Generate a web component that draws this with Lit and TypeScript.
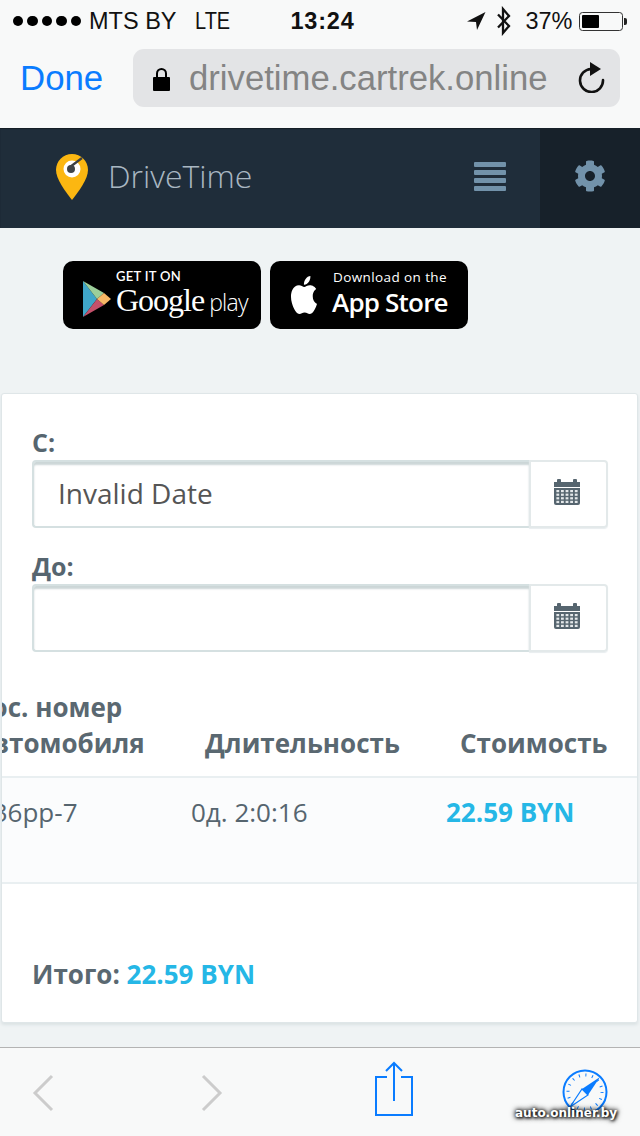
import { LitElement, html, css, svg } from "lit";
import { customElement } from "lit/decorators.js";

const calendar = html`<svg class="cal" viewBox="0 0 26 28" aria-hidden="true">
  <path fill="#56656f" d="M0 5h3V3a1 1 0 0 1 1-1h2a1 1 0 0 1 1 1v2h12V3a1 1 0 0 1 1-1h2a1 1 0 0 1 1 1v2h3v5H0z"/>
  <path fill="#56656f" d="M0 11h26v15a2 2 0 0 1-2 2H2a2 2 0 0 1-2-2z"/>
  ${[0, 1, 2, 3].map((r) => [0, 1, 2, 3, 4].map((c) => svg`<rect x="${2.4 + c * 4.6}" y="${13 + r * 3.6}" width="2.8" height="2.2" fill="#e4e8ea"/>`))}
</svg>`;

@customElement("app-root")
export class AppRoot extends LitElement {
  static styles = css`
    :host { display: block; width: 640px; height: 1136px; overflow: hidden; background: #eff3f4; font-family: "Open Sans", "Liberation Sans", sans-serif; position: relative; }
    .top { height: 128px; background: #f8f9f9; font-family: "Liberation Sans", sans-serif; display: flex; flex-direction: column; }
    .status { height: 42px; display: flex; align-items: center; font-size: 23.5px; color: #111; padding-left: 13px; }
    .dots { display: flex; gap: 4px; width: 76px; }
    .dots i { width: 10.4px; height: 10.4px; border-radius: 50%; background: #000; flex: none; }
    .lte { margin-left: 19px; width: 41px; transform: scaleX(.85); transform-origin: left; }
    .time { font-weight: 700; margin-left: 54px; width: 176px; letter-spacing: .8px; }
    .loc { width: 20px; height: 20px; }
    .bt { width: 16px; height: 30px; margin-left: 10px; }
    .pct { margin-left: 13px; width: 54px; }
    .batt { width: 44px; height: 19px; border: 1.2px solid #333; border-radius: 3.5px; padding: 2px; box-sizing: border-box; }
    .batt b { display: block; width: 17px; height: 100%; background: #000; border-radius: 1px; }
    .nub { width: 3px; height: 7px; background: #222; margin-left: 1px; border-radius: 0 2px 2px 0; }
    .nav { display: flex; align-items: flex-start; padding: 7px 0 0 20px; }
    .done { color: #0a7cff; font-size: 34.8px; width: 113px; line-height: 58px; }
    .url { width: 487px; height: 58px; background: #e3e4e6; border-radius: 11px; display: flex; align-items: center; color: #848484; font-size: 34.7px; box-sizing: border-box; padding-left: 20px; }
    .lock { width: 17px; height: 24px; margin-right: 19px; margin-top: 2px; }
    .url span { width: 388px; white-space: nowrap; }
    .reload { width: 30px; height: 32px; margin-top: -2px; }
    .head { height: 100px; background: #1f2d3a; display: flex; align-items: center; box-shadow: inset 0 1px 1px #141d25; }
    .pin { width: 34px; height: 48px; margin: -3px 20px 0 55px; }
    .brand { font-size: 32px; line-height: 40px; font-weight: 300; color: #a9b7c2; width: 365px; margin-top: -4px; margin-left: -1px; }
    .burger { width: 32px; display: flex; flex-direction: column; gap: 3px; margin-top: -3px; margin-left: 1px; }
    .burger i { height: 5px; border-radius: 1px; background: #7292aa; }
    .cog { margin-left: 34px; width: 100px; height: 100px; background: #17212a; display: flex; align-items: center; justify-content: center; }
    .cog svg { width: 32px; height: 32px; margin-top: -4px; }
    .stores { display: flex; gap: 9px; padding: 33px 0 0 63px; height: 165px; box-sizing: border-box; }
    .badge { width: 198px; height: 68px; background: #000; border-radius: 10px; color: #fff; display: flex; box-sizing: border-box; }
    .play { width: 28px; height: 36px; margin: 20px 0 0 20px; }
    .gtext { margin-left: 5px; display: flex; flex-direction: column; padding-top: 7px; }
    .gtext small { font-size: 13px; font-weight: 600; line-height: 17px; letter-spacing: .3px; font-family: "Lato", sans-serif; }
    .gplay { display: flex; align-items: baseline; line-height: 33px; margin-top: -1px; }
    .gplay b { font: 400 32px/33px "Liberation Serif", serif; letter-spacing: -1px; }
    .gplay span { font: 300 23px/33px "Open Sans", sans-serif; margin-left: 5px; letter-spacing: -.8px; }
    .apple { width: 32px; height: 38px; margin: 15px 0 0 18px; }
    .atext { margin-left: 12px; display: flex; flex-direction: column; padding-top: 8px; }
    .atext small { font: 400 13.5px/17px "Open Sans", sans-serif; letter-spacing: .4px; white-space: nowrap; padding-left: 1px; }
    .atext b { font: 600 26px/32px "Open Sans", sans-serif; letter-spacing: -.8px; white-space: nowrap; }
    .card { margin: 0 2px 0 1px; height: 630px; background: #fff; border: 1px solid #dfe6e8; border-radius: 3px; box-shadow: 0 2px 3px #dbe2e4; box-sizing: border-box; padding-top: 33px; display: flex; flex-direction: column; color: #56656f; overflow: hidden; }
    label { display: block; margin-left: 30px; font-size: 25px; line-height: 31px; padding-bottom: 2px; font-weight: 700; }
    .group { display: flex; margin: 0 29px 23px 30px; height: 68px; }
    .input { flex: none; width: 497px; box-sizing: border-box; border: 2px solid #d5e0e1; border-right: 0; border-radius: 4px 0 0 4px; box-shadow: inset 0 3px 2px #ccd6d7; font-size: 28px; color: #555; padding: 0 0 2px 24px; display: flex; align-items: center; }
    .addon { flex: 1; box-sizing: border-box; border: 2px solid #e3e9ea; border-radius: 0 4px 4px 0; box-shadow: 0 1px 1px #e8edef; display: flex; align-items: center; justify-content: center; padding: 0 4px 6px 0; }
    .cal { width: 26px; height: 28px; }
    .table { display: grid; grid-template-columns: 228px 255px 200px; margin-left: -39px; width: 690px; margin-top: 14px; }
    .th { font-size: 26px; line-height: 36px; font-weight: 700; padding: 0 0 15px 14px; align-self: end; white-space: nowrap; color: #5a6871; }
    .row { grid-column: 1 / -1; display: grid; grid-template-columns: subgrid; height: 108px; background: #fbfcfd; border-top: 2px solid #e9eff1; border-bottom: 2px solid #e9eff1; box-sizing: border-box; padding-top: 17px; font-size: 26px; line-height: 34px; }
    .price { color: #25b7e6; font-weight: 700; }
    .total { margin: 72px 0 0 30px; font-size: 26px; font-weight: 700; line-height: 36px; color: #5a6871; }
    .bottom { margin-top: 24px; height: 89px; background: #f8f9f9; border-top: 1px solid #b3b3b3; box-sizing: border-box; display: flex; }
    .bottom svg { flex: none; }
    .back { width: 24px; height: 40px; margin: 25px 0 0 31px; }
    .fwd { width: 24px; height: 40px; margin: 25px 0 0 145px; }
    .share { width: 42px; height: 56px; margin: 13px 0 0 149px; }
    .compass { width: 48px; height: 48px; margin: 20px 0 0 146px; }
    .mark { position: absolute; left: 515px; top: 1103px; font: 700 12px/20px "DejaVu Sans", sans-serif; color: #fff; white-space: nowrap; text-shadow: 0 0 4px #000, 0 0 6px #000, 1px 1px 3px #222; }
  `;

  render() {
    return html`
      <div class="top">
        <div class="status">
          <div class="dots"><i></i><i></i><i></i><i></i><i></i></div>
          <span>MTS BY</span><span class="lte">LTE</span>
          <span class="time">13:24</span>
          <svg class="loc" viewBox="0 0 20 20"><path d="M19.500 1 1 10.500 10 11l1 8z" fill="#111"/></svg>
          <svg class="bt" viewBox="0 0 16 30"><path d="M2 8.500 13 20l-6 7V3l6 7L2 21.500" fill="none" stroke="#111" stroke-width="2.300"/></svg>
          <span class="pct">37%</span>
          <div class="batt"><b></b></div><div class="nub"></div>
        </div>
        <div class="nav">
          <div class="done">Done</div>
          <div class="url">
            <svg class="lock" viewBox="0 0 17 24"><path d="M1 10h15a1 1 0 0 1 1 1v12a1 1 0 0 1-1 1H1a1 1 0 0 1-1-1V11a1 1 0 0 1 1-1z"/><path d="M4 11V6.500a4.500 4.500 0 0 1 9 0V11" fill="none" stroke="#000" stroke-width="2"/></svg>
            <span>drivetime.cartrek.online</span>
            <svg class="reload" viewBox="0 0 30 32"><path d="M14 8a11.500 11.500 0 1 0 12 11" fill="none" stroke="#111" stroke-width="2.600" stroke-linecap="round"/><path d="M13 1l11 7-11 7z" fill="#111"/></svg>
          </div>
        </div>
      </div>
      <div class="head">
        <svg class="pin" viewBox="0 0 34 48">
          <path d="M17 1C8 1 1 8 1 17c0 9 9 21 16 30 7-9 16-21 16-30C33 8 26 1 17 1z" fill="#fcb711"/>
          <circle cx="17" cy="16" r="8.500" fill="#fff"/>
          <path d="M15 14 27 5" stroke="#3a3f44" stroke-width="2.200"/>
          <circle cx="16" cy="16" r="4" fill="#3f4448"/>
        </svg>
        <div class="brand">DriveTime</div>
        <div class="burger"><i></i><i></i><i></i><i></i></div>
        <div class="cog"><svg viewBox="0 0 512 512"><path fill="#7292aa" d="M487.400 315.700l-42.600-24.600c4.300-23.200 4.300-47 0-70.200l42.600-24.600c4.900-2.800 7.100-8.600 5.500-14-11.100-35.600-30-67.800-54.700-94.600-3.800-4.100-10-5.100-14.800-2.300L380.800 110c-17.900-15.400-38.500-27.300-60.800-35.100V25.800c0-5.600-3.900-10.500-9.400-11.700-36.700-8.200-74.300-7.800-109.200 0-5.500 1.200-9.400 6.100-9.400 11.700V75c-22.200 7.900-42.800 19.800-60.800 35.100L88.700 85.500c-4.900-2.800-11-1.900-14.800 2.300-24.700 26.700-43.600 58.900-54.700 94.600-1.700 5.400.6 11.200 5.500 14L67.300 221c-4.300 23.200-4.300 47 0 70.200l-42.600 24.600c-4.900 2.800-7.100 8.600-5.500 14 11.100 35.600 30 67.800 54.700 94.600 3.800 4.100 10 5.100 14.800 2.300l42.600-24.600c17.900 15.400 38.500 27.300 60.800 35.100v49.200c0 5.600 3.900 10.500 9.400 11.700 36.700 8.200 74.300 7.800 109.200 0 5.500-1.200 9.400-6.100 9.400-11.700v-49.200c22.200-7.900 42.800-19.800 60.800-35.100l42.600 24.600c4.900 2.800 11 1.900 14.800-2.300 24.700-26.700 43.600-58.900 54.700-94.600 1.500-5.500-.7-11.300-5.600-14.100zM256 336c-44.100 0-80-35.900-80-80s35.900-80 80-80 80 35.900 80 80-35.900 80-80 80z"/></svg></div>
      </div>
      <div class="stores">
        <div class="badge">
          <svg class="play" viewBox="0 0 28 36">
            <path d="M0 0v36l14-18z" fill="#3fa6c9"/>
            <path d="M0 0l14 18 7-6z" fill="#9ccf9a"/>
            <path d="M0 36l14-18 7 6z" fill="#c4506a"/>
            <path d="M21 12l7 6-7 6-7-6z" fill="#f8b866"/>
          </svg>
          <div class="gtext"><small>GET IT ON</small><div class="gplay"><b>Google</b><span>play</span></div></div>
        </div>
        <div class="badge">
          <svg class="apple" viewBox="0 0 24 24" preserveAspectRatio="none"><path fill="#fff" d="M12.152 6.896c-.948 0-2.415-1.078-3.960-1.040-2.040.027-3.910 1.183-4.961 3.014-2.117 3.675-.546 9.103 1.519 12.090 1.013 1.454 2.208 3.090 3.792 3.039 1.520-.065 2.090-.987 3.935-.987 1.831 0 2.350.987 3.960.948 1.637-.026 2.676-1.480 3.676-2.948 1.156-1.688 1.636-3.325 1.662-3.415-.039-.013-3.182-1.221-3.220-4.857-.026-3.040 2.480-4.494 2.597-4.559-1.429-2.090-3.623-2.324-4.390-2.376-2-.156-3.675 1.090-4.610 1.090zM15.530 3.830c.843-1.012 1.400-2.427 1.245-3.830-1.207.052-2.662.805-3.532 1.818-.780.896-1.454 2.338-1.273 3.714 1.338.104 2.715-.688 3.559-1.701"/></svg>
          <div class="atext"><small>Download on the</small><b>App Store</b></div>
        </div>
      </div>
      <div class="card">
        <label>С:</label>
        <div class="group"><div class="input">Invalid Date</div><div class="addon">${calendar}</div></div>
        <label>До:</label>
        <div class="group"><div class="input"></div><div class="addon">${calendar}</div></div>
        <div class="table">
          <div class="th">Гос. номер<br />автомобиля</div>
          <div class="th">Длительность</div>
          <div class="th">Стоимость</div>
          <div class="row"><div>1436рр-7</div><div>0д. 2:0:16</div><div class="price">22.59 BYN</div></div>
        </div>
        <div class="total">Итого: <span class="price">22.59 BYN</span></div>
      </div>
      <div class="bottom">
        <svg class="back" viewBox="0 0 24 40"><path d="M21 3 4 20l17 17" fill="none" stroke="#ccc" stroke-width="3"/></svg>
        <svg class="fwd" viewBox="0 0 24 40"><path d="M3 3l17 17L3 37" fill="none" stroke="#ccc" stroke-width="3"/></svg>
        <svg class="share" viewBox="0 0 42 56" fill="none" stroke="#0a7cff" stroke-width="2">
          <path d="M14 16H3v38h36V16H28"/>
          <path d="M21 40V2M13 10l8-8 8 8"/>
        </svg>
        <svg class="compass" viewBox="0 0 48 48">
          <circle cx="24" cy="24" r="21.500" fill="none" stroke="#0a7cff" stroke-width="2"/>
          <circle cx="24" cy="24" r="17" fill="none" stroke="#0a7cff" stroke-width="3" stroke-dasharray="1 5.670"/>
          <path d="M39 9 27 27 21 21z" fill="#0a7cff"/>
          <path d="M9 39 27 27 21 21z" fill="none" stroke="#0a7cff" stroke-width="1.200"/>
        </svg>
      </div>
      <div class="mark">auto.onliner.by</div>
    `;
  }
}
